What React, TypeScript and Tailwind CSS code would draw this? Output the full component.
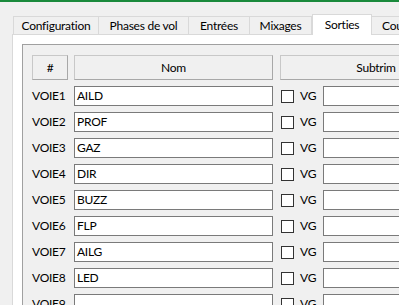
import React from "react";

const tabs = [
  { label: "Configuration", w: "w-[86px]" },
  { label: "Phases de vol", w: "w-[90px]" },
  { label: "Entrées", w: "w-[61px]" },
  { label: "Mixages", w: "w-[62px]" },
];

const voies = ["AILD", "PROF", "GAZ", "DIR", "BUZZ", "FLP", "AILG", "LED", ""];

function Row({ idx, name }: { idx: number; name: string }) {
  return (
    <div className="flex h-[20px] items-center">
      <span className="w-[42px] shrink-0 text-black">VOIE{idx}</span>
      <div className="flex h-[20px] w-[199px] shrink-0 items-center border border-[#7a7a7a] bg-white px-[2px] text-black">
        {name}
      </div>
      <span className="ml-[8px] h-[13px] w-[13px] shrink-0 border border-[#333333] bg-white" />
      <span className="ml-[6px] w-[23px] shrink-0 text-black">VG</span>
      <div className="h-[20px] w-[200px] shrink-0 border border-[#7a7a7a] bg-white" />
    </div>
  );
}

export default function App() {
  return (
    <div
      className="h-[305px] w-[399px] overflow-hidden bg-[#f0f0f0] text-[12px] leading-none tracking-[-0.25px]"
      style={{ fontFamily: "Lato, 'Noto Sans', sans-serif" }}
    >
      <div className="h-[2px] bg-[#1a8a3c]" />
      <div className="mt-[12px] flex h-[20px] items-end pl-[13px]">
        {tabs.map((t) => (
          <div
            key={t.label}
            className={`${t.w} flex h-[18px] shrink-0 items-center justify-center border-t border-r border-[#d9d9d9] text-black first:border-l`}
          >
            {t.label}
          </div>
        ))}
        <div className="relative z-10 -mb-px flex h-[21px] w-[60px] shrink-0 items-center justify-center border border-b-0 border-[#d9d9d9] bg-white text-black">
          Sorties
        </div>
        <div className="flex h-[18px] w-[60px] shrink-0 items-center border-t border-[#d9d9d9] pl-[10px] text-black">
          Cou
        </div>
      </div>
      <div className="ml-[12px] h-full border-t border-l border-[#d9d9d9] bg-white pt-[9px] pl-[9px]">
        <div className="h-full border-t border-l border-[#a0a0a0] bg-[#f0f0f0] pt-[10px] pl-[9px]">
          <div className="flex h-[25px] items-stretch">
            <div className="flex w-[36px] shrink-0 items-center justify-center border border-[#c8c8c8] border-r-[#a8a8a8] border-b-[#a8a8a8] text-black">
              #
            </div>
            <div className="ml-[6px] flex w-[199px] shrink-0 items-center justify-center border border-[#c8c8c8] border-r-[#a8a8a8] border-b-[#a8a8a8] text-black">
              Nom
            </div>
            <div className="ml-[7px] flex w-[192px] shrink-0 items-center justify-center border border-[#c8c8c8] border-r-[#a8a8a8] border-b-[#a8a8a8] text-black">
              Subtrim
            </div>
          </div>
          <div className="mt-[6px] flex flex-col gap-[6px]">
            {voies.map((v, i) => (
              <Row key={i} idx={i + 1} name={v} />
            ))}
          </div>
        </div>
      </div>
    </div>
  );
}
